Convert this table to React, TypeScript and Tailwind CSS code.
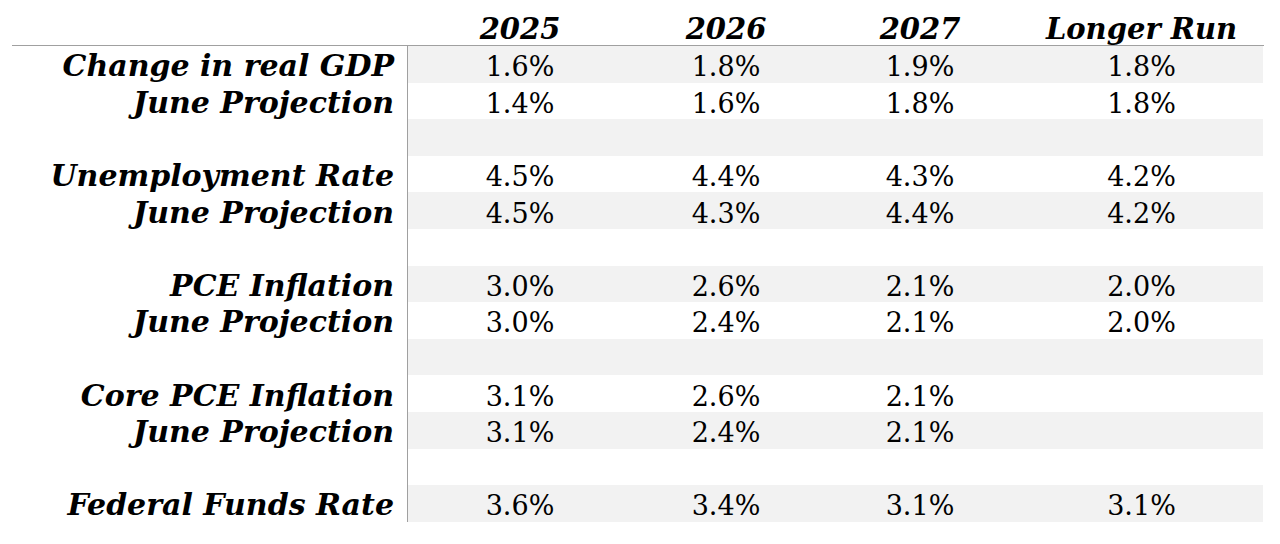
import React from 'react';

const cols = 'grid grid-cols-[396px_224px_188px_200px_243px]';

const rows: { label: string; values: string[] }[] = [
  { label: 'Change in real GDP', values: ['1.6%', '1.8%', '1.9%', '1.8%'] },
  { label: 'June Projection', values: ['1.4%', '1.6%', '1.8%', '1.8%'] },
  { label: '', values: ['', '', '', ''] },
  { label: 'Unemployment Rate', values: ['4.5%', '4.4%', '4.3%', '4.2%'] },
  { label: 'June Projection', values: ['4.5%', '4.3%', '4.4%', '4.2%'] },
  { label: '', values: ['', '', '', ''] },
  { label: 'PCE Inflation', values: ['3.0%', '2.6%', '2.1%', '2.0%'] },
  { label: 'June Projection', values: ['3.0%', '2.4%', '2.1%', '2.0%'] },
  { label: '', values: ['', '', '', ''] },
  { label: 'Core PCE Inflation', values: ['3.1%', '2.6%', '2.1%', ''] },
  { label: 'June Projection', values: ['3.1%', '2.4%', '2.1%', ''] },
  { label: '', values: ['', '', '', ''] },
  { label: 'Federal Funds Rate', values: ['3.6%', '3.4%', '3.1%', '3.1%'] },
];

export default function App() {
  return (
    <div className="w-[1280px] h-[544px] bg-white text-black pl-3 pr-4 font-['DejaVu_Serif',serif]">
      {/* column headings */}
      <div className={`${cols} h-[46px] items-end border-b border-[#a0a0a0] pb-[1px]`}>
        <div />
        {['2025', '2026', '2027', 'Longer Run'].map((h) => (
          <div key={h} className="text-center text-[29px] leading-none font-bold italic">
            {h}
          </div>
        ))}
      </div>

      {rows.map((r, i) => (
        <div key={i} className={`${cols} h-[36.6px]`}>
          <div className="flex items-center justify-end pt-[4px] pr-[13px] border-r border-[#a0a0a0] text-[30px] font-bold italic leading-none">
            {r.label}
          </div>
          {r.values.map((v, j) => (
            <div
              key={j}
              className={`flex items-center justify-center pt-[5px] text-[27px] leading-none ${
                i % 2 === 0 ? 'bg-[#f2f2f2]' : 'bg-white'
              }`}
            >
              {v}
            </div>
          ))}
        </div>
      ))}
    </div>
  );
}
